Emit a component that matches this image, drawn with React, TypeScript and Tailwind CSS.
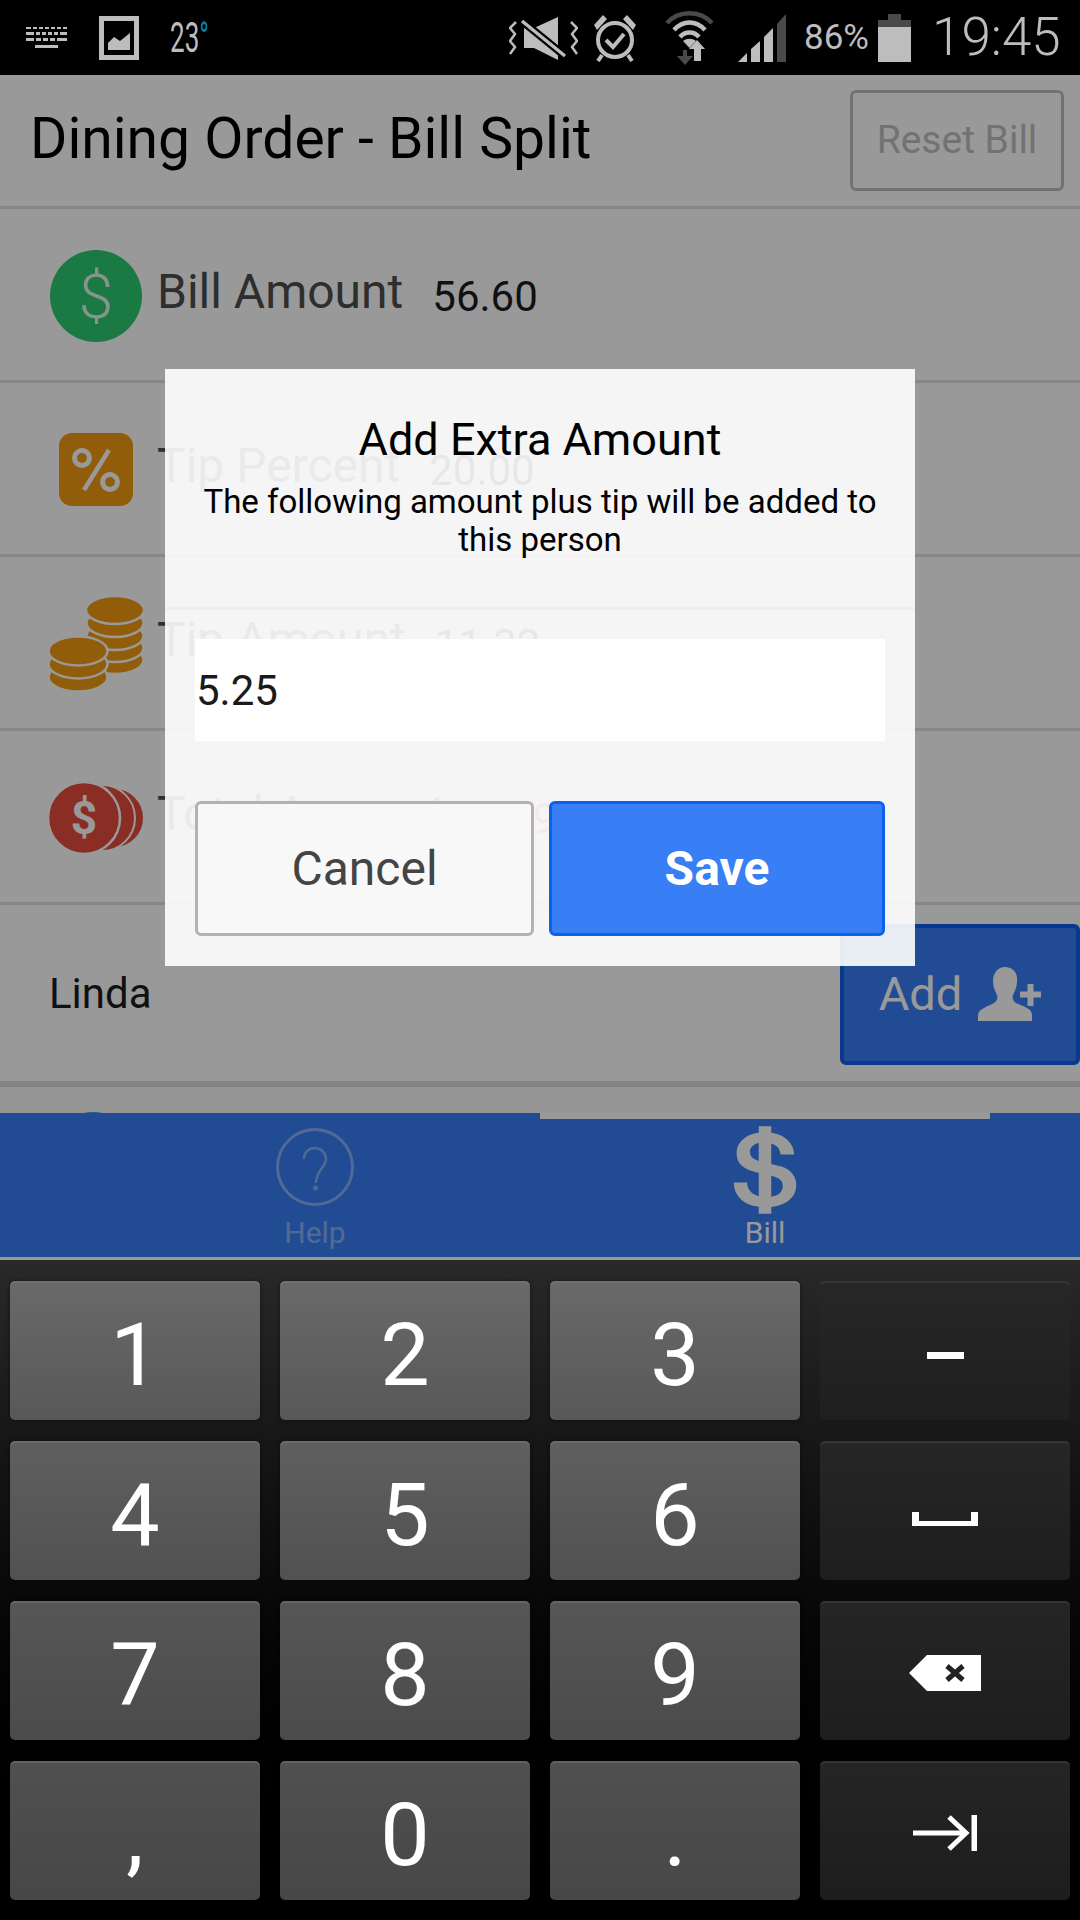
import { IoLogoUsd } from "react-icons/io";

const KEY_ROWS = [
  { num: "bg-gradient-to-b from-[#696969] to-[#585858]", side: "bg-gradient-to-b from-[#272727] to-[#1f1f1f]" },
  { num: "bg-gradient-to-b from-[#5f5f5f] to-[#515151]", side: "bg-gradient-to-b from-[#262626] to-[#1e1e1e]" },
  { num: "bg-gradient-to-b from-[#565656] to-[#4b4b4b]", side: "bg-gradient-to-b from-[#252525] to-[#1e1e1e]" },
  { num: "bg-gradient-to-b from-[#505050] to-[#474747]", side: "bg-gradient-to-b from-[#252525] to-[#1d1d1d]" },
];

const DIGITS = [
  ["1", "2", "3"],
  ["4", "5", "6"],
  ["7", "8", "9"],
  [",", "0", "."],
];

function KeyboardIcon() {
  return (
    <svg width="41" height="21" viewBox="0 0 41 21" fill="#bdbdbd">
      <path d="M0 0h5v2H0zM7 0h4v2H7zM13 0h4v2h-4zM19 0h4v2h-4zM25 0h4v2h-4zM31 0h4v2h-4zM37 0h4v2h-4z" />
      <path d="M0 5h8v3H0zM10 5h4v3h-4zM16 5h4v3h-4zM22 5h4v3h-4zM28 5h4v3h-4zM34 5h7v3h-7z" />
      <path d="M0 11h8v3H0zM10 11h5v3h-5zM17 11h5v3h-5zM24 11h5v3h-5zM31 11h10v3H31z" />
      <path d="M9 18h23v3H9z" />
    </svg>
  );
}

function PictureIcon() {
  return (
    <svg width="40" height="44" viewBox="0 0 40 44">
      <rect x="2.5" y="2.5" width="35" height="39" fill="none" stroke="#bdbdbd" strokeWidth="5" />
      <path d="M9 34V27L15 21L21 25L31 17V34Z" fill="#bdbdbd" />
    </svg>
  );
}

function MuteIcon() {
  return (
    <svg width="69" height="44" viewBox="0 0 69 44" fill="none">
      <path d="M7 6L1 12L6 18L1 25L6 31L1 38" stroke="#bdbdbd" strokeWidth="2.5" />
      <path d="M62 6L68 12L63 18L68 25L63 31L68 38" stroke="#bdbdbd" strokeWidth="2.5" />
      <path d="M15 12H25L49 1V44L25 32H15Z" fill="#bdbdbd" />
      <path d="M13 5L56 40" stroke="#000" strokeWidth="8" />
      <path d="M13 5L56 40" stroke="#bdbdbd" strokeWidth="3.5" />
    </svg>
  );
}

function AlarmIcon() {
  return (
    <svg width="44" height="48" viewBox="0 0 44 48" fill="none">
      <circle cx="22" cy="26" r="17" stroke="#bdbdbd" strokeWidth="4" />
      <path d="M1 11L10 1L14 5L4 16Z" fill="#bdbdbd" />
      <path d="M43 11L34 1L30 5L40 16Z" fill="#bdbdbd" />
      <path d="M13 26L20 33L31 20" stroke="#bdbdbd" strokeWidth="4" />
      <path d="M9 41L5 47M35 41L39 47" stroke="#bdbdbd" strokeWidth="4" />
    </svg>
  );
}

function WifiIcon() {
  return (
    <svg width="49" height="54" viewBox="0 0 49 54" fill="none">
      <path d="M2 12C14 -1 35 -1 47 12" stroke="#4a4a4a" strokeWidth="4.5" />
      <path d="M9 19C18 9 31 9 40 19" stroke="#bdbdbd" strokeWidth="4.5" />
      <path d="M15 26C20 20 29 20 34 26" stroke="#bdbdbd" strokeWidth="4.5" />
      <path d="M24.500 37L18 30C22 27 27 27 31 30Z" fill="#bdbdbd" />
      <path d="M18 39V45H12L20 54L28 45H22V39Z" fill="#4a4a4a" />
      <path d="M32 29L24 38H29V50H36V38H40Z" fill="#bdbdbd" />
    </svg>
  );
}

function SignalIcon() {
  return (
    <svg width="48" height="48" viewBox="0 0 48 48">
      <path d="M0 48L9 39V48Z" fill="#bdbdbd" />
      <path d="M13 35L22 27V48H13Z" fill="#bdbdbd" />
      <path d="M26 23L35 14V48H26Z" fill="#bdbdbd" />
      <path d="M39 10L48 0V48H39Z" fill="#4a4a4a" />
    </svg>
  );
}

function BatteryIcon() {
  return (
    <svg width="33" height="48" viewBox="0 0 33 48">
      <path d="M10 0H23V6H33V13H0V6H10Z" fill="#4a4a4a" />
      <rect x="0" y="13" width="33" height="35" fill="#bdbdbd" />
    </svg>
  );
}

function BillIcon() {
  return (
    <svg width="92" height="92" viewBox="0 0 92 92">
      <circle cx="46" cy="46" r="46" fill="#2ecc71" />
      <text x="46" y="68" textAnchor="middle" fontSize="62" fontWeight="300" fill="#ffffff" fillOpacity="0.85" fontFamily="Roboto, sans-serif">
        $
      </text>
    </svg>
  );
}

function PercentIcon() {
  return (
    <svg width="74" height="73" viewBox="0 0 74 73" fill="none">
      <rect width="74" height="73" rx="13" fill="#f39c12" />
      <circle cx="23" cy="25" r="7.500" stroke="#fff" strokeWidth="5" />
      <circle cx="51" cy="49" r="7.500" stroke="#fff" strokeWidth="5" />
      <path d="M50 17L25 57" stroke="#fff" strokeWidth="4.500" />
    </svg>
  );
}

function CoinsIcon() {
  return (
    <svg width="96" height="96" viewBox="0 0 96 96" fill="#f39c12" stroke="#fff" strokeWidth="2.500">
      <ellipse cx="67" cy="64" rx="28.500" ry="14" />
      <ellipse cx="67" cy="52" rx="28.500" ry="14" />
      <ellipse cx="67" cy="40" rx="28.500" ry="14" />
      <ellipse cx="67" cy="27" rx="28.500" ry="14" />
      <ellipse cx="67" cy="14" rx="29" ry="14" />
      <ellipse cx="30" cy="81" rx="29.500" ry="14.500" />
      <ellipse cx="30" cy="68" rx="29.500" ry="14.500" />
      <ellipse cx="30" cy="55" rx="29.500" ry="14.500" />
    </svg>
  );
}

function TotalIcon() {
  return (
    <svg width="96" height="74" viewBox="0 0 96 74" fill="#e74c3c" stroke="#fff">
      <circle cx="66" cy="37" r="30" strokeWidth="2" />
      <circle cx="54" cy="37" r="33" strokeWidth="2" />
      <circle cx="36" cy="37" r="36" strokeWidth="2.500" />
      <text x="36" y="53" textAnchor="middle" fontSize="46" fontWeight="700" fill="#ffffff" stroke="none" fontFamily="Roboto, sans-serif">
        $
      </text>
    </svg>
  );
}

function AddPersonIcon() {
  return (
    <svg width="63" height="54" viewBox="0 0 63 54" fill="currentColor">
      <path d="M27 0C35 0 40 6 39 14C39 20 37 24 35 28C34 31 35 34 38 36C44 39 54 41 54 48V54H0V48C0 42 11 39 16 36C19 34 20 31 19 28C17 24 15 20 15 14C15 6 20 0 27 0Z" />
      <path d="M49.500 17H55.500V24.500H63V30.500H55.500V39H49.500V30.500H42V24.500H49.500Z" />
    </svg>
  );
}

function HelpIcon() {
  return (
    <svg width="78" height="78" viewBox="0 0 78 78" fill="none" stroke="currentColor">
      <circle cx="39" cy="39" r="37.500" strokeWidth="3" />
      <path d="M28 31C28 24 33 20 39 20C45 20 50 25 50 31C50 39 40 42 40 55" strokeWidth="2.500" />
      <circle cx="39.500" cy="60" r="2.500" fill="currentColor" stroke="none" />
    </svg>
  );
}

function SideKeyIcon({ index }: { index: number }) {
  if (index === 0) return <div className="mt-[8px] h-[7px] w-[37px] bg-white" />;
  if (index === 1) {
    return (
      <svg className="mt-[14px]" width="66" height="14" viewBox="0 0 66 14" fill="#fff">
        <path d="M0 0H7V9H59V0H66V14H0Z" />
      </svg>
    );
  }
  if (index === 2) {
    return (
      <svg className="mt-[2px]" width="72" height="36" viewBox="0 0 72 36">
        <path d="M0 18L18 0H72V36H18Z" fill="#fff" />
        <path d="M38 11L54 25M54 11L38 25" stroke="#222" strokeWidth="5" />
      </svg>
    );
  }
  return (
    <svg className="mt-[2px]" width="64" height="36" viewBox="0 0 64 36" fill="none" stroke="#fff" strokeWidth="5">
      <path d="M0 18H52" />
      <path d="M36 2L53 18L36 34" />
      <path d="M61.500 0V36" strokeWidth="6" />
    </svg>
  );
}

function SummaryRow({
  icon,
  label,
  value,
  valueClass = "text-[#1c1c1c]",
}: {
  icon: React.ReactNode;
  label: string;
  value: string;
  valueClass?: string;
}) {
  return (
    <div className="flex h-[174px] shrink-0 items-center border-b-[3px] border-[#e2e2e2]">
      <div className="mt-[2px] flex w-[157px] shrink-0 justify-center pl-[48px] pr-[13px]">{icon}</div>
      <span className="-mt-[6px] text-[48px] text-[#4d4d4d]">{label}</span>
      <span className={`ml-[29px] mt-[3px] text-[42px] ${valueClass}`}>{value}</span>
    </div>
  );
}

export default function App() {
  return (
    <div className="flex h-[1920px] w-[1080px] flex-col overflow-hidden bg-black font-['Roboto',sans-serif]">
      {/* Status bar */}
      <div className="flex h-[75px] shrink-0 items-center bg-black pl-[26px] text-[#bdbdbd]">
        <KeyboardIcon />
        <div className="ml-[32px]">
          <PictureIcon />
        </div>
        <span className="ml-[31px] w-[35px] origin-left scale-x-[0.62] whitespace-nowrap text-[42px] leading-none">
          23<span className="text-[#0a7fa8]">°</span>
        </span>
        <div className="ml-[304px] flex items-center">
          <MuteIcon />
          <div className="ml-[15px]">
            <AlarmIcon />
          </div>
          <div className="ml-[28px]">
            <WifiIcon />
          </div>
          <div className="ml-[24px]">
            <SignalIcon />
          </div>
          <span className="ml-[18px] text-[35px] leading-none">86%</span>
          <div className="ml-[9px]">
            <BatteryIcon />
          </div>
          <span className="ml-[21px] text-[53px] font-light leading-none">19:45</span>
        </div>
      </div>

      {/* App, dimmed by the dialog backdrop */}
      <div className="relative flex h-[1185px] shrink-0 flex-col bg-white">
        <div className="flex h-[134px] shrink-0 items-center justify-between border-b-[3px] border-[#e2e2e2] pl-[30px] pr-[16px]">
          <h1 className="-mt-[3px] text-[57px] font-normal text-black">Dining Order - Bill Split</h1>
          <button className="h-[101px] w-[214px] rounded-[6px] border-[3px] border-[#bfbfbf] text-[39px] text-[#bfbfbf]">
            Reset Bill
          </button>
        </div>

        <SummaryRow icon={<BillIcon />} label="Bill Amount" value="56.60" />
        <SummaryRow icon={<PercentIcon />} label="Tip Percent" value="20.00" />
        <SummaryRow icon={<CoinsIcon />} label="Tip Amount" value="11.32" />
        <SummaryRow icon={<TotalIcon />} label="Total Amount" value="67.92" valueClass="text-[#e74c3c]" />

        <div className="flex h-[182px] shrink-0 items-center justify-between border-b-[6px] border-[#dcdcdc] pl-[49px]">
          <span className="text-[42px] text-[#1c1c1c]">Linda</span>
          <button className="mt-[2px] flex h-[141px] w-[240px] items-center justify-center gap-[16px] rounded-[6px] border-[4px] border-[#0c60ee] bg-[#387ef5] text-[47px] text-white">
            Add
            <AddPersonIcon />
          </button>
        </div>

        <div className="relative flex-1 overflow-hidden bg-[#f8f8f8]">
          <div className="absolute left-[47px] top-[25px] h-[92px] w-[92px] rounded-full bg-[#3498db]" />
        </div>

        {/* Tabs */}
        <div className="relative mb-[3px] grid h-[144px] shrink-0 grid-cols-2 bg-[#387ef5] px-[90px] text-white">
          <div className="flex flex-col items-center border-t-[6px] border-transparent pt-[9px] opacity-40">
            <HelpIcon />
            <span className="mt-[11px] text-[30px] leading-[32px]">Help</span>
          </div>
          <div className="flex flex-col items-center border-t-[6px] border-white">
            <IoLogoUsd className="mt-[1px] h-[100px] w-[100px] shrink-0" />
            <span className="-mt-[3px] text-[30px] leading-[32px]">Bill</span>
          </div>
        </div>

        {/* Backdrop */}
        <div className="absolute inset-0 bg-black/40" />

        {/* Dialog */}
        <div className="absolute left-[165px] top-[294px] h-[597px] w-[750px] bg-white/90 text-center">
          <div className="h-[241px] border-b-[3px] border-[#eeeeee] px-[30px] pt-[45px]">
            <div className="text-[45px] leading-[52px] text-black">Add Extra Amount</div>
            <p className="mt-[17px] text-[33px] leading-[38px] text-black">
              The following amount plus tip will be added to this person
            </p>
          </div>
          <div className="mx-[30px] mt-[29px] flex h-[102px] items-center bg-white pl-[1px] text-[42px] text-[#1a1a1a]">
            5.25
          </div>
          <div className="mx-[30px] mt-[60px] flex gap-[15px]">
            <button className="h-[135px] w-[339px] rounded-[6px] border-[3px] border-[#b2b2b2] bg-[#f8f8f8] text-[48px] text-[#444444]">
              Cancel
            </button>
            <button className="h-[135px] w-[336px] rounded-[6px] border-[3px] border-[#0c60ee] bg-[#387ef5] text-[48px] font-bold text-white">
              Save
            </button>
          </div>
        </div>
      </div>

      {/* Numeric keyboard */}
      <div className="grid flex-1 grid-cols-[repeat(4,250px)] auto-rows-[139px] gap-x-[20px] gap-y-[21px] bg-gradient-to-b from-[#292929] to-black px-[10px] pt-[21px]">
        {DIGITS.map((row, r) => (
          <div key={r} className="contents">
            {row.map((d) => (
              <div
                key={d}
                className={`flex items-center justify-center rounded-[5px] border-t-2 border-white/15 pt-[6px] text-[88px] leading-none text-white shadow-[0_0_4px_rgba(0,0,0,0.5)] ${KEY_ROWS[r].num}`}
              >
                {d}
              </div>
            ))}
            <div className={`flex items-center justify-center rounded-[5px] border-t-2 border-white/10 ${KEY_ROWS[r].side}`}>
              <SideKeyIcon index={r} />
            </div>
          </div>
        ))}
      </div>
    </div>
  );
}
